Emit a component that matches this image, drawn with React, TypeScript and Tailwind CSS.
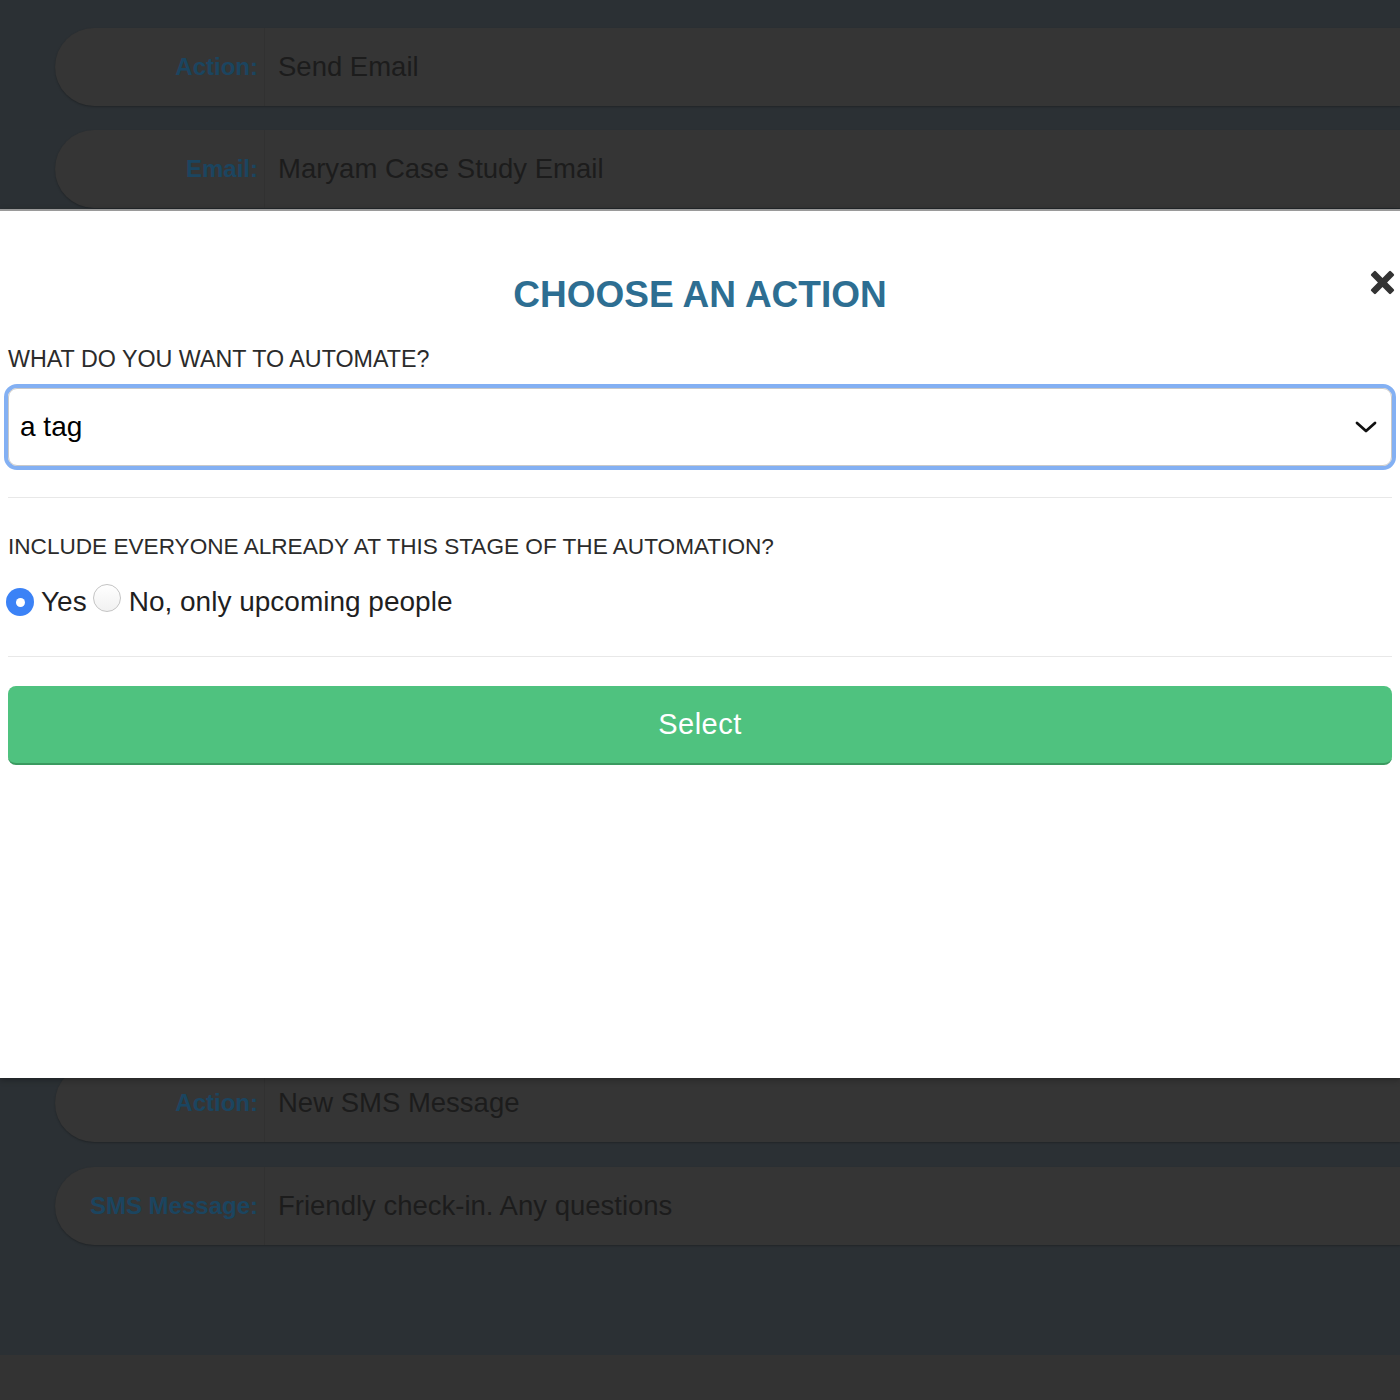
import { useState } from "react";

const topRows = [
  { label: "Action:", value: "Send Email" },
  { label: "Email:", value: "Maryam Case Study Email" },
];

const bottomRows = [
  { label: "Action:", value: "New SMS Message" },
  { label: "SMS Message:", value: "Friendly check-in. Any questions" },
];

const StepRow = ({ label, value }: { label: string; value: string }) => (
  <div className="ml-[55px] flex h-[78px] items-stretch rounded-l-[40px] bg-[#353535] shadow-[0_1px_2px_rgba(0,0,0,0.25)]">
    <div className="flex w-[210px] shrink-0 items-center justify-end border-r border-[#313131] pr-[6px]">
      <span className="text-[24px] font-bold text-[#1b4560]">{label}</span>
    </div>
    <div className="flex items-center pl-[13px]">
      <span className="text-[27.5px] text-[#1c1c1c]">{value}</span>
    </div>
  </div>
);

const Radio = ({ checked, onClick }: { checked: boolean; onClick: () => void }) => (
  <button
    type="button"
    onClick={onClick}
    className={
      checked
        ? "flex h-[28px] w-[28px] items-center justify-center rounded-full bg-[#3b82f6]"
        : "h-[28px] w-[28px] rounded-full border border-[#c4c4c4] bg-gradient-to-b from-white to-[#f1f1f1]"
    }
  >
    {checked && <span className="h-[9px] w-[9px] rounded-full bg-white" />}
  </button>
);

export default function App() {
  const [everyone, setEveryone] = useState(true);

  return (
    <div className="relative min-h-[1400px] bg-[#2b3034] font-['Liberation_Sans',Arial,sans-serif]">
      {/* page behind the overlay */}
      <div className="flex flex-col gap-[24px] pt-[28px]">
        {topRows.map((r) => (
          <StepRow key={r.label} {...r} />
        ))}
      </div>
      <div className="mt-[856px] flex flex-col gap-[25px]">
        {bottomRows.map((r) => (
          <StepRow key={r.label} {...r} />
        ))}
      </div>
      <div className="absolute bottom-0 left-0 right-0 h-[45px] bg-[#333333]" />

      {/* modal */}
      <div className="absolute left-0 right-0 top-[209px] h-[869px] border-t-2 border-[#9a9a9a] bg-white shadow-[0_2px_6px_rgba(0,0,0,0.3)]">
        <button className="absolute right-[5px] top-[59px] text-[#333]" aria-label="Close">
          <svg width="25" height="25" viewBox="0 0 24 24" fill="currentColor">
            <path d="M5.6 1.2 12 7.6l6.4-6.4a1.2 1.2 0 0 1 1.7 0l2.7 2.7a1.2 1.2 0 0 1 0 1.7L16.4 12l6.4 6.4a1.2 1.2 0 0 1 0 1.7l-2.7 2.7a1.2 1.2 0 0 1-1.7 0L12 16.4l-6.4 6.4a1.2 1.2 0 0 1-1.7 0l-2.7-2.7a1.2 1.2 0 0 1 0-1.7L7.6 12 1.2 5.6a1.2 1.2 0 0 1 0-1.7l2.7-2.7a1.2 1.2 0 0 1 1.7 0z" />
          </svg>
        </button>

        <h2 className="pt-[63px] text-center text-[37px] font-bold leading-[42px] text-[#2d6e92]">CHOOSE AN ACTION</h2>

        <div className="px-[8px]">
          <p className="mt-[28px] text-[23.3px] leading-[30px] text-[#2b2b2b]">WHAT DO YOU WANT TO AUTOMATE?</p>

          <div className="-mx-[4px] mt-[10px] rounded-[13px] border-[4px] border-[#83b0f3]">
            <div className="flex h-[78px] items-center justify-between rounded-[9px] border border-[#c9c9c9] bg-white pl-[11px] pr-[14px]">
              <span className="text-[28px] text-black">a tag</span>
              <svg width="22" height="14" viewBox="0 0 22 14" fill="none" stroke="#111" strokeWidth="2.8" strokeLinecap="round" strokeLinejoin="round">
                <path d="M2 3l9 8 9-8" />
              </svg>
            </div>
          </div>

          <div className="mt-[27px] h-px bg-[#e8e8e8]" />

          <p className="mt-[34px] text-[22.6px] leading-[30px] text-[#2b2b2b]">INCLUDE EVERYONE ALREADY AT THIS STAGE OF THE AUTOMATION?</p>

          <div className="mt-[19px] flex items-center text-[28px] text-[#1f1f1f]">
            <div className="-ml-[2px]">
              <Radio checked={everyone} onClick={() => setEveryone(true)} />
            </div>
            <span className="ml-[7px]">Yes</span>
            <div className="ml-[6px]">
              <Radio checked={!everyone} onClick={() => setEveryone(false)} />
            </div>
            <span className="ml-[8px]">No, only upcoming people</span>
          </div>

          <div className="mt-[33px] h-px bg-[#e8e8e8]" />

          <button className="mt-[29px] flex h-[79px] w-full items-center justify-center rounded-[8px] border-b-2 border-[#3a9a60] bg-[#4fc27f] text-[29px] tracking-[0.5px] text-white">
            Select
          </button>
        </div>
      </div>
    </div>
  );
}
